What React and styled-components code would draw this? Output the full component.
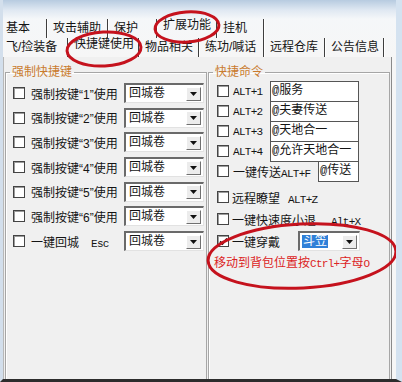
import React from 'react';
import styled, { createGlobalStyle } from 'styled-components';

const GlobalStyle = createGlobalStyle`
  html, body {
    margin: 0;
    padding: 0;
    background: #f0f0f0;
  }
  body {
    font-family: "Liberation Sans", "Noto Sans CJK SC", sans-serif;
    font-size: 12px;
    color: #141414;
  }
`;

// window frame
const Window = styled.div`
  position: relative;
  width: 402px;
  height: 382px;
  box-sizing: border-box;
  display: flex;
  flex-direction: column;
  border-left: 3px solid #d3dfec;
  border-right: 6px solid #d4e2f0;
  border-bottom: 3px solid #2c2c2c;
  background: linear-gradient(to bottom, #b7cbe0 0, #dfe8f2 10px, #f5f7f9 19px, #f6f6f6 57px);
  overflow: hidden;
`;

const TopFade = styled.div`
  height: 19px;
  flex: none;
`;

const TabRow = styled.div`
  display: flex;
  height: 19px;
  flex: none;
`;

const Tab = styled.div`
  box-sizing: border-box;
  width: ${p => p.$w}px;
  padding-left: ${p => (p.$first ? 3 : 6)}px;
  line-height: ${p => (p.$active ? 13 : 19)}px;
  white-space: nowrap;
  border-right: 1px solid #3e3e3e;
  box-shadow: 1px 0 0 #ffffff;
`;

const Panel = styled.div`
  flex: 1;
  display: flex;
  gap: 1px;
  width: 389px;
  box-sizing: border-box;
  padding: 8px 0 0 1px;
  border-left: 1px solid #b8b8b8;
  border-right: 1px solid #8a8a8a;
  background: #f0f0f0;
  min-height: 0;
`;

const Group = styled.fieldset`
  box-sizing: border-box;
  width: ${p => p.$w}px;
  flex: none;
  margin: 0;
  padding: 0;
  min-width: 0;
  border: 1px solid #a6a6a6;
  border-bottom: none;
  box-shadow: inset 1px 1px 0 #ffffff;
`;

const Legend = styled.legend`
  margin-left: 4px;
  padding: 0 2px;
  color: #c97b2e;
  font-size: 12px;
  line-height: 14px;
`;

const GroupBody = styled.div`
  display: flex;
  flex-direction: column;
  gap: ${p => p.$gap || 0}px;
  padding: ${p => p.$pt}px 0 0 ${p => p.$pl}px;
`;

const Row = styled.div`
  display: flex;
  align-items: center;
  height: ${p => p.$h}px;
  margin-top: ${p => p.$mt || 0}px;
  white-space: nowrap;
`;

const Check = styled.span`
  box-sizing: border-box;
  flex: none;
  width: 12px;
  height: 12px;
  margin-right: ${p => p.$mr}px;
  border: 1px solid #444444;
  background: #ffffff;
  box-shadow: inset 1px 1px 0 #9c9c9c;
  display: flex;
  align-items: center;
  justify-content: center;
`;

const Label = styled.span`
  flex: none;
  width: ${p => p.$w}px;
  white-space: nowrap;
`;

const Mono = styled.span`
  font-family: "Liberation Mono", "Noto Sans CJK SC", monospace;
  font-size: 11px;
  letter-spacing: -0.7px;
  margin-left: ${p => p.$ml || 0}px;
`;

const Select = styled.div`
  box-sizing: border-box;
  flex: none;
  width: ${p => p.$w}px;
  height: 20px;
  display: flex;
  align-items: center;
  justify-content: space-between;
  padding: 0 2px 0 2px;
  background: #ffffff;
  border-top: 2px solid #6a6a6a;
  border-left: 2px solid #6a6a6a;
  border-right: 1px solid #e2e2e2;
  border-bottom: 1px solid #e2e2e2;
`;

const Picked = styled.span`
  line-height: 13px;
  padding: 0 1px;
  background: ${p => (p.$hl ? '#2f80d8' : 'transparent')};
  color: ${p => (p.$hl ? '#ffffff' : '#141414')};
`;

const DropBtn = styled.span`
  box-sizing: border-box;
  width: 15px;
  height: 14px;
  display: flex;
  align-items: center;
  justify-content: center;
  background: #ececec;
  border: 1px solid;
  border-color: #ffffff #707070 #707070 #ffffff;
`;

const CmdBox = styled.div`
  box-sizing: border-box;
  flex: none;
  width: ${p => p.$w}px;
  height: 21px;
  margin: -0.5px 0;
  padding-left: 1px;
  border: 1px solid #555555;
  background: #ffffff;
  font-family: "Liberation Mono", "Noto Sans CJK SC", monospace;
  font-size: 12px;
  line-height: 19px;
`;

const Note = styled.div`
  height: 22px;
  line-height: 22px;
  padding-left: 5px;
  color: #dc2323;
  white-space: nowrap;
`;

const Marks = styled.svg`
  position: absolute;
  left: -3px;
  top: 0;
  pointer-events: none;
`;

const Arrow = () => (
  <svg width="7" height="4" viewBox="0 0 7 4">
    <path d="M0 0h7L3.5 4z" fill="#111" />
  </svg>
);

const Tick = () => (
  <svg width="9" height="9" viewBox="0 0 9 9">
    <path d="M1 4.5l2.5 2.5L8 1.5" fill="none" stroke="#111" strokeWidth="1.8" />
  </svg>
);

const Combo = ({ w, value, hl }) => (
  <Select $w={w}>
    <Picked $hl={hl}>{value}</Picked>
    <DropBtn><Arrow /></DropBtn>
  </Select>
);

const topTabs = [
  { t: '基本', w: 44 },
  { t: '攻击辅助', w: 61 },
  { t: '保护', w: 49 },
  { t: '扩展功能', w: 60, active: true },
  { t: '挂机', w: 47 },
];

const subTabs = [
  { t: '飞/捡装备', w: 65 },
  { t: '快捷键使用', w: 71, active: true },
  { t: '物品相关', w: 60 },
  { t: '练功/喊话', w: 65 },
  { t: '远程仓库', w: 61 },
  { t: '公告信息', w: 59 },
];

const cmds = [
  { key: 'ALT+1', text: '@服务' },
  { key: 'ALT+2', text: '@夫妻传送' },
  { key: 'ALT+3', text: '@天地合一' },
  { key: 'ALT+4', text: '@允许天地合一' },
];

export default function App() {
  return (
    <>
      <GlobalStyle />
      <Window>
        <TopFade />
        <TabRow>
          {topTabs.map((tab, i) => (
            <Tab key={tab.t} $w={tab.w} $first={i === 0} $active={tab.active}>{tab.t}</Tab>
          ))}
        </TabRow>
        <TabRow>
          {subTabs.map((tab, i) => (
            <Tab key={tab.t} $w={tab.w} $first={i === 0} $active={tab.active}>{tab.t}</Tab>
          ))}
        </TabRow>

        <Panel>
          <Group $w={202}>
            <Legend>强制快捷键</Legend>
            <GroupBody $pt={4} $pl={7} $gap={4.7}>
              {[1, 2, 3, 4, 5, 6].map(n => (
                <Row key={n} $h={20}>
                  <Check $mr={6} />
                  <Label $w={93}>强制按键“{n}”使用</Label>
                  <Combo w={80} value="回城卷" />
                </Row>
              ))}
              <Row $h={20}>
                <Check $mr={6} />
                <Label $w={93}>一键回城<Mono $ml={12}>Esc</Mono></Label>
                <Combo w={80} value="回城卷" />
              </Row>
            </GroupBody>
          </Group>

          <Group $w={182}>
            <Legend>快捷命令</Legend>
            <GroupBody $pt={2} $pl={8}>
              {cmds.map(c => (
                <Row key={c.key} $h={20}>
                  <Check $mr={4} />
                  <Label $w={37}><Mono>{c.key}</Mono></Label>
                  <CmdBox $w={89}>{c.text}</CmdBox>
                </Row>
              ))}
              <Row $h={20}>
                <Check $mr={4} />
                <Label $w={85}>一键传送<Mono>ALT+F</Mono></Label>
                <CmdBox $w={41}>@传送</CmdBox>
              </Row>
              <Row $h={22} $mt={5}>
                <Check $mr={3} />
                <Label $w={100}>远程瞭望<Mono $ml={8}>ALT+Z</Mono></Label>
              </Row>
              <Row $h={22}>
                <Check $mr={3} />
                <Label $w={140}>一键快速度小退<Mono $ml={15}>Alt+X</Mono></Label>
              </Row>
              <Row $h={22}>
                <Check $mr={3}><Tick /></Check>
                <Label $w={66}>一键穿戴</Label>
                <Combo w={62} value="斗笠" hl />
              </Row>
            </GroupBody>
            <Note>移动到背包位置按<Mono>Ctrl+</Mono>字母<Mono>O</Mono></Note>
          </Group>
        </Panel>

        <Marks width="402" height="382" viewBox="0 0 402 382">
          <g fill="none" stroke="#c5121d" strokeWidth="3">
            <ellipse cx="187" cy="27" rx="32" ry="15" transform="rotate(-4 187 27)" />
            <ellipse cx="104" cy="49" rx="37" ry="17" transform="rotate(-3 104 49)" />
            <ellipse cx="302" cy="256" rx="94" ry="32" transform="rotate(-3 302 256)" />
          </g>
        </Marks>
      </Window>
    </>
  );
}
